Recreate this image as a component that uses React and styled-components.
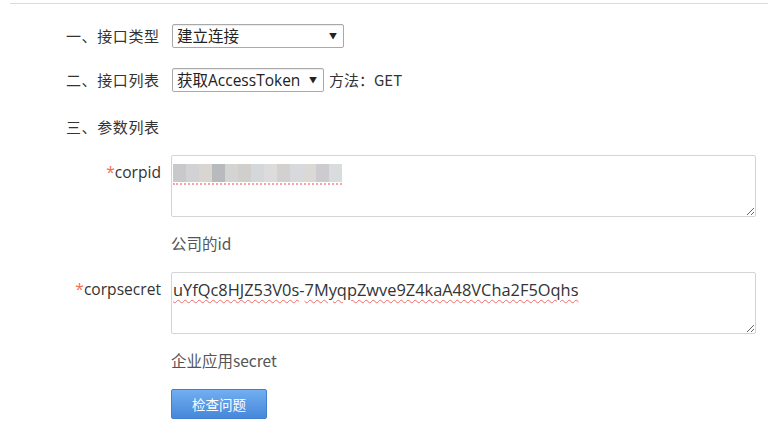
import React, { useState } from "react";
import styled, { createGlobalStyle } from "styled-components";

// Debug panel for the enterprise API: pick an interface, fill the params, check.

const GlobalStyle = createGlobalStyle`
  html, body {
    margin: 0;
    background: #fff;
    font-family: "Noto Sans CJK SC", "Open Sans", sans-serif;
    color: #333;
  }
`;

const mosaic = ["#c9c9cb", "#d2d2d4", "#d9d6d2", "#b8bbbe", "#d4d4d2", "#d0cfcb", "#d5d8db", "#dcdcdc", "#d3d0d0", "#d7d9dc", "#dad9d6", "#cdcad0", "#d8dcdd"];

function App() {
  const [type, setType] = useState("connect");
  const [api, setApi] = useState("token");
  const [secret, setSecret] = useState("uYfQc8HJZ53V0s-7MyqpZwve9Z4kaA48VCha2F5Oqhs");

  // the screenshot shows the browser's spellcheck squiggles, mirror them
  const words = secret.split(/(-)/);

  return (
    <Page>
      <GlobalStyle />
      <Form>
        <Row $gap={21}>
          <Label>一、接口类型</Label>
          <SelectWrap>
            <Select $width={172} value={type} onChange={(e) => setType(e.target.value)}>
              <option value="connect">建立连接</option>
            </Select>
            <Arrow>▼</Arrow>
          </SelectWrap>
        </Row>
        <Row $gap={24}>
          <Label>二、接口列表</Label>
          <SelectWrap>
            <Select $width={152} value={api} onChange={(e) => setApi(e.target.value)}>
              <option value="token">获取AccessToken</option>
            </Select>
            <Arrow>▼</Arrow>
          </SelectWrap>
          <Method>方法：GET</Method>
        </Row>
        <Row $gap={17}>
          <Label>三、参数列表</Label>
        </Row>

        <Params>
          <ParamLabel><Star>*</Star>corpid</ParamLabel>
          <Field>
            <AreaWrap>
              <Area spellCheck={false} defaultValue="" />
              <Mosaic>
                {mosaic.map((c, i) => (
                  <span key={i} style={{ background: c }} />
                ))}
              </Mosaic>
            </AreaWrap>
            <Hint>公司的id</Hint>
          </Field>

          <ParamLabel><Star>*</Star>corpsecret</ParamLabel>
          <Field>
            <AreaWrap>
              <Area spellCheck={false} value={secret} onChange={(e) => setSecret(e.target.value)} />
              <Squiggles aria-hidden="true">
                {words.map((w, i) => (w === "-" ? <span key={i}>-</span> : <Wavy key={i}>{w}</Wavy>))}
              </Squiggles>
            </AreaWrap>
            <Hint>企业应用secret</Hint>
          </Field>

          <span />
          <Field>
            <Button>检查问题</Button>
          </Field>
        </Params>
      </Form>
    </Page>
  );
}

const Page = styled.div`
  margin: 3px 0 0 10px;
  border-top: 1px solid #dcdcdc;
  height: 419px;
`;

const Form = styled.div`
  padding: 20px 0 0 56px;
  display: flex;
  flex-direction: column;
`;

const Row = styled.div`
  display: flex;
  align-items: center;
  height: 23px;
  margin-bottom: ${(p) => p.$gap}px;
  font-size: 15px;
`;

const Label = styled.span`
  width: 106px;
  color: #333;
  letter-spacing: 0.6px;
`;

const SelectWrap = styled.div`
  position: relative;
  display: flex;
`;

const Select = styled.select`
  appearance: none;
  width: ${(p) => p.$width}px;
  height: 24px;
  padding: 0 16px 0 4px;
  border: 1px solid #a9a9a9;
  border-radius: 2px;
  background: #fff;
  box-shadow: inset 0 1px 1px rgba(0, 0, 0, 0.08);
  font-family: "Open Sans", "Noto Sans CJK SC", sans-serif;
  font-size: 15.5px;
  color: #222;
  outline: none;
`;

const Arrow = styled.span`
  position: absolute;
  right: 7px;
  top: 6px;
  font-size: 8px;
  color: #222;
  pointer-events: none;
`;

const Method = styled.span`
  margin-left: 5px;
  color: #333;
  font-family: "Noto Sans CJK SC", "Open Sans", sans-serif;
`;

const Params = styled.div`
  display: grid;
  grid-template-columns: 95px 585px;
  column-gap: 10px;
`;

const ParamLabel = styled.div`
  text-align: right;
  font-family: "Open Sans", sans-serif;
  font-size: 15.6px;
  line-height: 20px;
  padding-top: 7px;
  color: #333;
`;

const Star = styled.span`
  color: #f26d50;
`;

const Field = styled.div`
  display: flex;
  flex-direction: column;
  align-items: flex-start;
`;

const AreaWrap = styled.div`
  position: relative;
  width: 585px;
`;

const Area = styled.textarea`
  display: block;
  box-sizing: border-box;
  width: 585px;
  height: 62px;
  margin: 0;
  padding: 6px 1px;
  border: 1px solid #d4d4d4;
  border-radius: 2px;
  font-family: "Open Sans", "Noto Sans CJK SC", sans-serif;
  font-size: 16.4px;
  line-height: 22px;
  color: #333;
  resize: vertical;
  outline: none;
`;

const Squiggles = styled.div`
  position: absolute;
  left: 2px;
  top: 7px;
  font-family: "Open Sans", "Noto Sans CJK SC", sans-serif;
  font-size: 16.4px;
  line-height: 22px;
  color: transparent;
  white-space: pre;
  pointer-events: none;
`;

const Wavy = styled.span`
  text-decoration: underline wavy #f06a6a;
  text-decoration-thickness: 1px;
  text-underline-offset: 3px;
`;

const Mosaic = styled.div`
  position: absolute;
  left: 2px;
  top: 9px;
  display: flex;
  height: 19px;
  pointer-events: none;
  border-bottom: 2px dotted #f3a3a3;

  span {
    width: 13px;
    height: 18px;
  }
`;

const Hint = styled.div`
  font-family: "Noto Sans CJK SC", "Open Sans", sans-serif;
  font-size: 15.5px;
  color: #555;
  height: 55px;
  padding-top: 15px;
  box-sizing: border-box;
`;

const Button = styled.button`
  width: 96px;
  height: 30px;
  border: 1px solid #3f7fcc;
  border-radius: 2px;
  background: linear-gradient(#72aef1, #4687da);
  color: #fff;
  font-family: "Noto Sans CJK SC", sans-serif;
  font-size: 13.5px;
  cursor: pointer;
`;

export default App;
